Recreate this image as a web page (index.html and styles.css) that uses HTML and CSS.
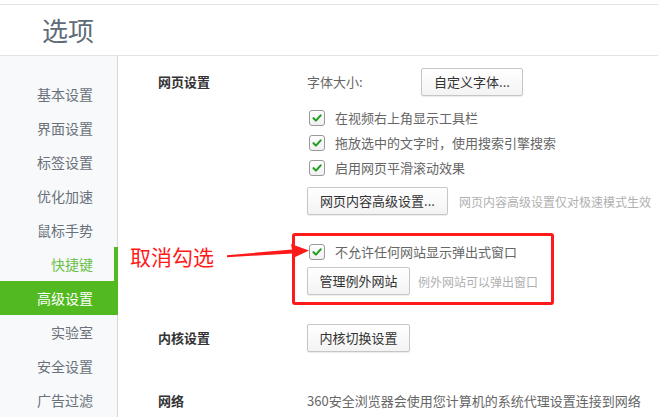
FILE: index.html
```html
<!DOCTYPE html>
<html lang="zh-CN">
<head>
<meta charset="utf-8">
<link rel="stylesheet" href="styles.css">
</head>
<body>
<div class="page">
  <header class="header"><h1 class="title">选项</h1></header>
  <div class="body">
    <nav class="sidebar">
      <div class="nav-item">基本设置</div>
      <div class="nav-item">界面设置</div>
      <div class="nav-item">标签设置</div>
      <div class="nav-item">优化加速</div>
      <div class="nav-item">鼠标手势</div>
      <div class="nav-item hover">快捷键</div>
      <div class="nav-item active">高级设置</div>
      <div class="nav-item">实验室</div>
      <div class="nav-item">安全设置</div>
      <div class="nav-item">广告过滤</div>
    </nav>
    <main class="main">
      <section class="section s-web">
        <div class="label">网页设置</div>
        <div class="controls">
          <div class="row font-row"><span class="text font-label">字体大小:</span><button class="btn btn-font">自定义字体...</button></div>
          <div class="checks">
            <label class="check-row"><span class="cb"><svg viewBox="0 0 16 16"><path d="M4 8.2l2.8 2.8L12.2 5" /></svg></span><span class="text">在视频右上角显示工具栏</span></label>
            <label class="check-row"><span class="cb"><svg viewBox="0 0 16 16"><path d="M4 8.2l2.8 2.8L12.2 5" /></svg></span><span class="text">拖放选中的文字时，使用搜索引擎搜索</span></label>
            <label class="check-row"><span class="cb"><svg viewBox="0 0 16 16"><path d="M4 8.2l2.8 2.8L12.2 5" /></svg></span><span class="text">启用网页平滑滚动效果</span></label>
          </div>
          <div class="row btn-row"><button class="btn">网页内容高级设置...</button><span class="hint">网页内容高级设置仅对极速模式生效</span></div>
          <div class="popup">
            <label class="check-row"><span class="cb"><svg viewBox="0 0 16 16"><path d="M4 8.2l2.8 2.8L12.2 5" /></svg></span><span class="text">不允许任何网站显示弹出式窗口</span></label>
            <div class="row btn-row2"><button class="btn">管理例外网站</button><span class="hint">例外网站可以弹出窗口</span></div>
          </div>
        </div>
      </section>
      <section class="section s-kernel">
        <div class="label">内核设置</div>
        <div class="controls"><button class="btn">内核切换设置</button></div>
      </section>
      <section class="section s-net">
        <div class="label">网络</div>
        <div class="controls"><span class="text">360安全浏览器会使用您计算机的系统代理设置连接到网络</span></div>
      </section>
    </main>
  </div>
  <div class="annot-text">取消勾选</div>
  <svg class="annot-arrow" width="658" height="417" viewBox="0 0 658 417"><polygon points="227,255.2 292,249.6 291,244 309,250.5 292,258.5 292.5,253.4 227,257.2" fill="#ff1a1a"/></svg>
  <div class="annot-box"></div>
</div>
</body>
</html>
```

FILE: styles.css
```css
* { box-sizing: border-box; }
html, body { margin: 0; padding: 0; }
body {
  width: 658px;
  height: 417px;
  overflow: hidden;
  background: #fff;
  font-family: "Microsoft YaHei", "Noto Sans CJK SC", "Noto Sans", sans-serif;
  color: #666;
}
.page { position: relative; width: 658px; height: 417px; overflow: hidden; }
.header {
  margin-top: 4px;
  height: 52px;
  border-top: 1px solid #e3e3e3;
  border-bottom: 1px solid #e3e3e3;
  display: flex;
  align-items: center;
  padding-left: 42px;
}
.title {
  margin: 0;
  font-size: 26px;
  font-weight: normal;
  color: #5f6b78;
  line-height: 30px;
  letter-spacing: 0;
}
.body { display: flex; height: 361px; }
.sidebar {
  width: 118px;
  flex: none;
  background: #f7f9fb;
  border-right: 1px solid #d6d9dc;
  padding-top: 21px;
}
.nav-item {
  height: 34px;
  line-height: 34px;
  text-align: right;
  padding-right: 24px;
  font-size: 14px;
  color: #6a717a;
  position: relative;
}
.nav-item.hover { color: #6cc04a; }
.nav-item.hover::after {
  content: "";
  position: absolute;
  right: -1px;
  top: 0;
  width: 4px;
  height: 34px;
  background: #53b920;
}
.nav-item.active {
  background: #53b920;
  color: #fff;
  margin-right: -1px;
  padding-right: 25px;
}
.main { flex: 1; padding-left: 40px; padding-top: 12px; }
.section { display: flex; }
.label {
  width: 149px;
  flex: none;
  font-size: 13px;
  font-weight: bold;
  color: #333;
  line-height: 28px;
}
.controls { display: flex; flex-direction: column; align-items: flex-start; }
.text { font-size: 13px; color: #666; line-height: 20px; white-space: nowrap; }
.row { display: flex; align-items: center; }
.font-label { width: 114px; }
.btn {
  font-family: inherit;
  font-size: 13px;
  color: #333;
  height: 28px;
  padding: 0 12px;
  border: 1px solid #c6c6c6;
  border-radius: 2px;
  background: linear-gradient(#ffffff, #f3f3f3);
  box-shadow: 0 1px 1px rgba(0,0,0,0.08);
  line-height: 26px;
  white-space: nowrap;
  margin: 0;
}
.btn-font { width: 102px; padding: 0; }
.checks { margin-top: 9px; display: flex; flex-direction: column; }
.check-row { display: flex; align-items: center; height: 25px; }
.cb {
  width: 16px;
  height: 16px;
  margin-left: 2px;
  margin-right: 10px;
  border: 1px solid #9a9a9a;
  border-radius: 3px;
  background: linear-gradient(#ffffff, #f0f0f0);
  display: flex;
  align-items: center;
  justify-content: center;
}
.cb svg { width: 14px; height: 14px; }
.cb path { fill: none; stroke: #1f9e1f; stroke-width: 2.4; stroke-linecap: round; stroke-linejoin: round; }
.btn-row { margin-top: 7px; }
.btn-row .btn { width: 141px; padding: 0; }
.hint { font-size: 12px; color: #b0b0b0; margin-left: 11px; white-space: nowrap; }
.popup { margin-top: 24px; display: flex; flex-direction: column; }
.btn-row2 { margin-top: 3px; }
.btn-row2 .btn { width: 103px; padding: 0; }
.btn-row2 .hint { margin-left: 8px; }
.s-kernel { margin-top: 29px; }
.s-kernel .btn { width: 103px; padding: 0; }
.s-net { margin-top: 39px; }
.s-net .label, .s-net .text { line-height: 20px; }
.annot-text {
  position: absolute;
  left: 130px;
  top: 242px;
  font-size: 21px;
  line-height: 28px;
  color: #ff1a1a;
  font-family: "Noto Sans CJK SC", sans-serif;
}
.annot-arrow { position: absolute; left: 0; top: 0; pointer-events: none; }
.annot-box {
  position: absolute;
  left: 292px;
  top: 233px;
  width: 262px;
  height: 72px;
  border: 3px solid #ff1a1a;
  border-radius: 3px;
}
```
